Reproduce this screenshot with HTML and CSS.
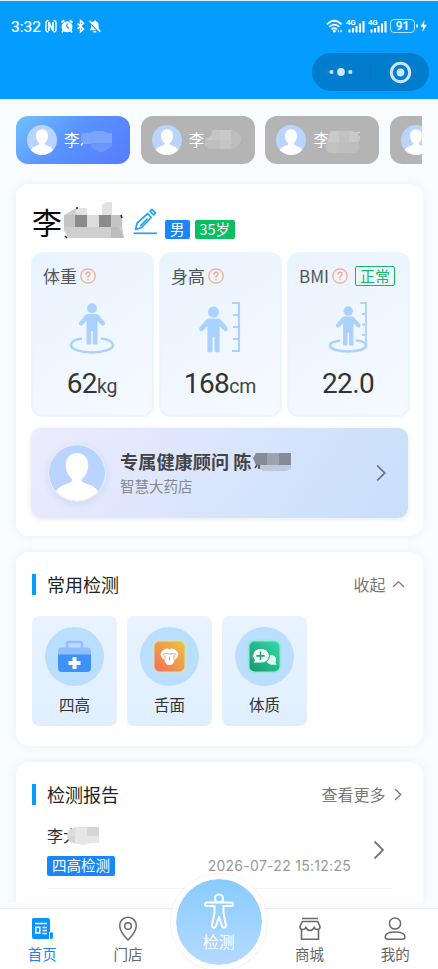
FILE: index.html
```html
<!DOCTYPE html>
<html lang="zh-CN">
<head>
<meta charset="utf-8">
<meta name="viewport" content="width=device-width, initial-scale=1">
<title>健康检测</title>
<link rel="stylesheet" href="styles.css">
</head>
<body>
<svg class="defs" width="0" height="0" aria-hidden="true">
  <defs>
    <symbol id="avatar" viewBox="0 0 60 60">
      <circle cx="30" cy="30" r="30" fill="#b8d4ff"/>
      <path d="M30 8.500C22.500 8.500 18 14 18 21.500C18 28 20.500 32.500 24.500 36.500C26 39 23 40 19.500 41.500C13 43.500 9.500 46 7.500 49.800A30 30 0 0 0 52.500 49.800C50.500 46 47 43.500 40.500 41.500C37 40 34 39 35.500 36.500C39.500 32.500 42 28 42 21.500C42 14 37.500 8.500 30 8.500Z" fill="#fff"/>
    </symbol>
    <symbol id="help" viewBox="0 0 16 16">
      <g fill="none" stroke="#f8a486" stroke-width="1.200" stroke-linecap="round">
        <circle cx="8" cy="8" r="7.200"/>
        <path d="M6 6.300C6 3.400 10.200 3.500 10.100 6C10 7.500 8 7.500 8 9.300"/>
        <path d="M8 11.400V11.600" stroke-width="1.400"/>
      </g>
    </symbol>
    <symbol id="man" viewBox="0 0 28 42">
      <g fill="#abd2ff">
        <circle cx="14" cy="5.200" r="5"/>
        <path d="M10 11H18Q19.500 11 20.500 12L26.800 19.500Q27.600 21 26.300 22.200Q24.800 23.200 23.500 22L19.500 18V40.500Q19.500 41.500 18.500 41.500H15.800Q14.800 41.500 14.800 40.500V28H13.200V40.500Q13.200 41.500 12.200 41.500H9.500Q8.500 41.500 8.500 40.500V18L4.500 22Q3.200 23.200 1.700 22.200Q.4 21 1.200 19.500L7.500 12Q8.500 11 10 11Z"/>
      </g>
    </symbol>
    <symbol id="signal" viewBox="0 0 19 15">
      <path d="M3.500 10.500V13.500M7 9V13.500M10.500 7V13.500M14 4.500V13.500M17.500 2V13.500" stroke="#fff" stroke-width="2.100"/>
    </symbol>
  </defs>
</svg>

<div class="app">
  <header class="header">
    <div class="status">
      <span class="clock">3:32</span>
      <svg class="status-left" width="56" height="15" viewBox="0 0 56 15">
        <g fill="none" stroke="#fff" stroke-width="1.400">
          <path d="M3.500 1.800H2.500Q1 1.800 1 4V10.500Q1 12.800 2.500 12.800H3.500M8.500 1.800H9.500Q11 1.800 11 4V10.500Q11 12.800 9.500 12.800H8.500"/>
          <path d="M4 12V3L8 12V3" stroke-width="1.700"/>
          <path d="M32.500 4.500L38.500 10L35.500 12.800V1.500L38.500 4.300L32.500 10" stroke-width="1.500"/>
          <path d="M16.500 3.500L19.300 1.300M24.700 1.300L27.500 3.500" stroke-width="1.800"/>
        </g>
        <circle cx="22" cy="7.800" r="5.500" fill="#fff"/>
        <path d="M18.500 11L17 13.500M25.500 11L27 13.500" stroke="#fff" stroke-width="1.500"/>
        <path d="M22 4.500V8L24 9.500" fill="none" stroke="#049cff" stroke-width="1.200"/>
        <path d="M44.500 11.200L46 9V6Q46 3 49 2.300V1.500H50.800V2.300Q53.500 3 53.500 6V9L55 11.200Z" fill="#fff"/>
        <path d="M48.500 12H51.300V13.500H48.500Z" fill="#fff"/>
        <path d="M44 3L54.500 13.500" stroke="#049cff" stroke-width="1.200"/>
        <path d="M44.500 1.800L55.300 12.800" stroke="#fff" stroke-width="1.400"/>
      </svg>
      <div class="status-right">
        <svg class="wifi" width="17" height="14" viewBox="0 0 17 14">
          <g fill="none" stroke="#fff" stroke-width="1.700">
            <path d="M1 5.300Q8.300-1.800 15.600 5.300M3.300 7.900Q8.300 3.300 13.300 7.900M5.600 10.300Q8.300 8 11 10.300"/>
          </g>
          <circle cx="8.300" cy="12" r="1.600" fill="#fff"/>
          <path d="M11.500 12L13 10.500V13.500ZM16.300 12L14.500 10.500V13.500Z" fill="#fff"/>
        </svg>
        <span class="cell"><svg width="19" height="15"><use href="#signal"/></svg><b>4G</b></span>
        <span class="cell"><svg width="19" height="15"><use href="#signal"/></svg><b>4G</b></span>
        <span class="battery">91</span>
        <svg class="bolt" width="12" height="14" viewBox="0 0 12 14"><path d="M1 5.500V8.500" stroke="#fff" stroke-width="1.600"/><path d="M8.500 1L4.500 7.700H7.200L6.200 13L11 5.800H8Z" fill="#fff"/></svg>
      </div>
    </div>
    <div class="capsule">
      <svg width="117" height="38" viewBox="0 0 117 38">
        <g fill="#cde6fa"><circle cx="19.500" cy="19" r="2.100"/><circle cx="29" cy="19" r="3.900"/><circle cx="38.300" cy="19" r="2.100"/><circle cx="88.500" cy="19.500" r="3.900"/></g>
        <path d="M58.500 7.500V31" stroke="#0876c4" stroke-width="1"/>
        <circle cx="88.500" cy="19.500" r="9.200" fill="none" stroke="#cde6fa" stroke-width="3"/>
      </svg>
    </div>
  </header>

  <main class="content">
    <div class="members">
      <div class="member active">
        <svg class="face" width="30" height="30"><use href="#avatar"/></svg><span>李</span>
        <svg class="mask" width="34" height="24" viewBox="0 0 34 24"><path d="M4.500 13L2 16.500" stroke="#fff" stroke-width="1.300"/><path d="M3 4H11L15 2H24L28 4H33V17L28 20Q23 25 18 22L13 19L12 15H5Q0 12 3 4Z" fill="#79a5fb"/><path d="M12 14H33V17L28 20Q23 25 18 22L13 19Z" fill="#6d96fa"/></svg>
      </div>
      <div class="member">
        <svg class="face" width="30" height="30"><use href="#avatar"/></svg><span>李</span>
        <svg class="mask wide" width="42" height="22" viewBox="0 0 42 22"><path d="M6 13L3.500 16.500" stroke="#fff" stroke-width="1.300"/><path d="M10 1H29Q36 2 38 6Q41 11 37 15Q34 20 29 20H6Q1 15 4 9H10Z" fill="#bebebe"/><path d="M10 1H29V11H3L10 6Z" fill="#cacaca"/><path d="M10 1H18V11H10ZM18 11H29V20H18Z" fill="#c5c5c5"/></svg>
      </div>
      <div class="member">
        <svg class="face" width="30" height="30"><use href="#avatar"/></svg><span>李</span>
        <svg class="mask" width="37" height="23" viewBox="0 0 37 23"><path d="M31 2L35 1M34 5V10" stroke="#ddd" stroke-width="1"/><path d="M6 0H27Q34 2 34 8V17Q33 22 28 22H8Q0 23 1 15Q2 4 6 0Z" fill="#bebebe"/><path d="M6 0H14V11H2ZM24 0H27L33 3V11H24Z" fill="#cacaca"/><path d="M14 0H24V11H14ZM1 11H14V22H7Q0 22 1 11Z" fill="#c2c2c2"/></svg>
      </div>
      <div class="member">
        <svg class="face" width="30" height="30"><use href="#avatar"/></svg>
      </div>
    </div>

    <section class="card profile">
      <div class="person">
        <span class="name">李</span>
        <svg class="name-mask" width="61" height="37" viewBox="0 0 61 37">
          <path d="M0 13L12 6L23 7V13H38L39 3L46 0H48V13H58V24L60 36H5L0 29Z" fill="#cfcfcf"/>
          <path d="M12 6H23V13H12ZM38 3L43 0H48V13H38Z" fill="#e2e2e2"/>
          <path d="M11 13H23V25H11ZM35 13H47V25H35Z" fill="#8b8b8b"/>
          <path d="M0 13H11V25H0ZM47 13H58V25H47Z" fill="#c4c4c4"/>
          <path d="M23 13H35V25H23Z" fill="#dcdcdc"/>
          <path d="M47 25H55L60 36H47Z" fill="#bdbdbd"/>
          <path d="M12 6H14M57 13L58 16M1 34L3 36" stroke="#222" stroke-width="1.500"/>
        </svg>
        <svg class="pencil" width="25" height="27" viewBox="0 0 25 27">
          <g fill="none" stroke="#23a3f4" stroke-width="1.700" stroke-linejoin="round">
            <path d="M2.500 21.500L4 15.200L14.800 5.500L18.200 9.500L8.500 19.500Z"/><path d="M7.200 18.200L14.700 10.500"/>
            <path d="M17 3.300L19 1.400L22.500 4.800L20.700 6.900Z"/>
            <path d="M.5 25.300H24"/>
          </g>
        </svg>
        <span class="tag blue">男</span><span class="tag green">35岁</span>
      </div>

      <div class="stats">
        <div class="stat">
          <div class="stat-title">体重<svg width="16" height="16"><use href="#help"/></svg></div>
          <svg class="figure" width="46" height="54" viewBox="0 0 46 54"><path d="M13 36.500C5 37.500 2 40 2 43C2 47.500 12 50.500 23 50.500S44 47.500 44 43C44 40 40 37.500 32 36.500" fill="none" stroke="#abd2ff" stroke-width="2.500"/><use href="#man" x="9" y="1" width="28" height="42"/></svg>
          <div class="value">62<small>kg</small></div>
        </div>
        <div class="stat">
          <div class="stat-title">身高<svg width="16" height="16"><use href="#help"/></svg></div>
          <svg class="figure" width="46" height="54" viewBox="0 0 46 54"><use href="#man" x="1" y="4" width="31" height="47"/><path d="M35 1H42V49H35M36 13H42M36 25H42M36 37H42" fill="none" stroke="#abd2ff" stroke-width="2.100"/></svg>
          <div class="value">168<small>cm</small></div>
        </div>
        <div class="stat">
          <div class="stat-title">BMI<svg width="16" height="16"><use href="#help"/></svg><span class="normal">正常</span></div>
          <svg class="figure" width="46" height="54" viewBox="0 0 46 54"><path d="M15 38.500C8 39.500 5 41 5 43.500C5 47 13 49.500 23 49.500S41 47 41 43.500C41 41 37 39 31 38.500" fill="none" stroke="#abd2ff" stroke-width="2.600"/><use href="#man" x="10" y="4" width="26.500" height="40"/><path d="M35.500 1H41V44M37 12H41M37 22.500H41M37 33H41" fill="none" stroke="#abd2ff" stroke-width="1.800"/></svg>
          <div class="value">22.0</div>
        </div>
      </div>

      <div class="advisor">
        <svg class="portrait" width="56" height="56"><use href="#avatar"/></svg>
        <div class="advisor-info">
          <div class="advisor-name">专属健康顾问 陈<svg width="39" height="19" viewBox="0 0 39 19"><path d="M0 6L3 1H38V17L33 19H10L4 15Z" fill="#bdc9de"/><path d="M0 6L3 1H14V13H3Z" fill="#868c96"/><path d="M14 1H26V13H14Z" fill="#9ca3ae"/><path d="M26 1H38V13H26Z" fill="#858b97"/><path d="M2 16L4 13M6 17V13" stroke="#444" stroke-width="1.500"/></svg></div>
          <div class="advisor-store">智慧大药店</div>
        </div>
        <svg class="chevron" width="10" height="18" viewBox="0 0 10 18"><path d="M1.200 1.500L8.700 9L1.200 16.500" fill="none" stroke="#666d78" stroke-width="1.700"/></svg>
      </div>
    </section>

    <section class="card tests">
      <div class="section-head"><h2>常用检测</h2><span class="more">收起<svg width="13" height="8" viewBox="0 0 13 8"><path d="M1 7L6.500 1.500L12 7" fill="none" stroke="#777" stroke-width="1.200"/></svg></span></div>
      <div class="tiles">
        <div class="tile">
          <svg width="59" height="59" viewBox="0 0 59 59"><circle cx="29.500" cy="29.500" r="29.500" fill="#badffe"/><path d="M22 21V17Q22 15 24 15H35Q37 15 37 17V21" fill="none" stroke="#90beff" stroke-width="2.600"/><path d="M13 28V24Q13 20.500 16.500 20.500H42.500Q46 20.500 46 24V28Z" fill="#90beff"/><path d="M13 27.500H46V41Q46 45 42 45H17Q13 45 13 41Z" fill="#3f91fa"/><path d="M29.500 30V42M23.500 36H35.500" stroke="#fff" stroke-width="4"/></svg>
          <span>四高</span>
        </div>
        <div class="tile">
          <svg width="59" height="59" viewBox="0 0 59 59"><defs><linearGradient id="warm" x1="0" y1="1" x2="1" y2="0"><stop offset=".1" stop-color="#f27758"/><stop offset="1" stop-color="#edc43d"/></linearGradient></defs><circle cx="29.500" cy="29.500" r="29.500" fill="#badffe"/><rect x="12.500" y="12.500" width="34" height="34" rx="6" fill="#d2dfcb"/><rect x="14.500" y="14.500" width="30" height="30" rx="5" fill="url(#warm)"/><path d="M20.500 27.500C21.500 24 24.500 21.500 27 21.500Q28.500 21.500 29.500 22.500Q30.500 21.500 32 21.500C34.500 21.500 37.500 24 38.500 27.500C37.500 31 36 32.500 34.500 32.800Q34 38 29.500 38T24.500 32.800C23 32.500 21.500 31 20.500 27.500Z" fill="#fff"/><path d="M23 27.300Q26 25.800 29.500 27Q33 25.800 36 27.300M29.500 29.500V33.500M25 28.500V32.500M34 28.500V32.500" fill="none" stroke="#ef9455" stroke-width=".9"/></svg>
          <span>舌面</span>
        </div>
        <div class="tile">
          <svg width="59" height="59" viewBox="0 0 59 59"><defs><linearGradient id="fresh" x1="0" y1="1" x2="1" y2="0"><stop offset="0" stop-color="#159a6c"/><stop offset="1" stop-color="#35d8ac"/></linearGradient></defs><circle cx="29.500" cy="29.500" r="29.500" fill="#badffe"/><rect x="12.500" y="12.500" width="34" height="34" rx="6" fill="#9ee5e1"/><rect x="14.500" y="14.500" width="30" height="30" rx="5" fill="url(#fresh)"/><path d="M36.500 28A4.800 4.800 0 0 1 40.500 35.500L41.500 37.800H36.500A4.900 4.900 0 0 1 36.500 28Z" fill="#d8fbed"/><path d="M25.500 21.500A8 7.300 0 1 1 25.500 36H18L19.500 33.500A8 7.300 0 0 1 25.500 21.500Z" fill="#effff8" stroke="#25ad83" stroke-width="1"/><path d="M25.500 24.500V33M21.300 28.800H29.700" stroke="#23a87d" stroke-width="1.700"/></svg>
          <span>体质</span>
        </div>
      </div>
    </section>

    <section class="card reports">
      <div class="section-head"><h2>检测报告</h2><span class="more">查看更多<svg class="right" width="8" height="13" viewBox="0 0 8 13"><path d="M1 1L6.700 6.500L1 12" fill="none" stroke="#777" stroke-width="1.300"/></svg></span></div>
      <div class="report">
        <div class="report-body">
          <div class="report-name">李<i>大</i><svg width="33" height="19" viewBox="0 0 33 19"><path d="M1 5L8 1H32V17H24L17 19L4 17L0 11Z" fill="#e6e6e6"/><path d="M20 1H32V10H20ZM0 10H8V17L2 15Z" fill="#d5d5d5"/><path d="M1 5L8 1V10H0Z" fill="#dcdcdc"/></svg></div>
          <div class="report-meta"><span class="tag blue report-tag">四高检测</span><time>2026-07-22 15:12:25</time></div>
        </div>
        <svg class="chevron" width="12" height="20" viewBox="0 0 12 20"><path d="M1.500 1.500L10 10L1.500 18.500" fill="none" stroke="#777" stroke-width="1.800"/></svg>
      </div>
    </section>
  </main>

  <nav class="tabbar">
    <div class="tab current">
      <svg width="26" height="26" viewBox="0 0 26 26"><path d="M4 2H19Q21 2 21 4V16.500H24V21Q24 23 22 23H5Q3 23 3 21V3Z" fill="#0b95fb"/><g fill="none" stroke="#fff" stroke-width="1.500"><path d="M6 7.500H18M13.500 11.500H18M13.500 14.500H18M13.500 17.500H18"/><rect x="6.800" y="11.300" width="4" height="5.700"/><path d="M20.500 16V23" stroke-width="1"/></g></svg>
      <span>首页</span>
    </div>
    <div class="tab">
      <svg width="26" height="26" viewBox="0 0 26 26"><g fill="none" stroke="#696969" stroke-width="1.500"><path d="M13 24C8 19 4.700 14.500 4.700 9.500A8.300 8.300 0 0 1 21.300 9.500C21.300 14.500 18 19 13 24Z"/><circle cx="13" cy="10" r="3.300"/></g></svg>
      <span>门店</span>
    </div>
    <div class="tab center">
      <div class="scan">
        <svg width="32" height="37" viewBox="0 0 32 37"><g fill="none" stroke="#fff" stroke-width="2" stroke-linejoin="round"><circle cx="16" cy="5.500" r="4"/><path d="M4 9.500H28Q30 9.500 30 11.300T28 13H20.500V20L23 32Q23 34.500 21.300 34.700T19 33L16 24L13 33Q12.300 35 10.700 34.700T9 32L11.500 20V13H4Q2 13 2 11.300T4 9.500Z"/></g></svg>
        <span>检测</span>
      </div>
    </div>
    <div class="tab">
      <svg width="26" height="26" viewBox="0 0 26 26"><g fill="none" stroke="#696969" stroke-width="1.600"><path d="M5 2.500H21M5.300 5.500H20.700L23 10.500Q23 13.500 20.300 13.500Q18 13.500 17.200 11.500Q15.500 14.500 13 14.500T8.800 11.500Q8 13.500 5.700 13.500Q3 13.500 3 10.500ZM4.500 13V23.200H21.500V13"/></g></svg>
      <span>商城</span>
    </div>
    <div class="tab">
      <svg width="26" height="26" viewBox="0 0 26 26"><g fill="none" stroke="#696969" stroke-width="1.500"><circle cx="13" cy="7.500" r="5.600"/><path d="M6 23.200Q3.200 23.200 3.200 21C3.200 18 7 16 13 16S23 18 23 21Q23 23.200 20.200 23.200Z"/></g></svg>
      <span>我的</span>
    </div>
  </nav>
</div>
</body>
</html>
```
FILE: styles.css
```css
* { box-sizing: border-box; }
body {
  margin: 0;
  background: #f8fcff;
  color: #333;
  font-family: "Noto Sans CJK SC", sans-serif;
}
svg { display: block; flex: none; }
i { font-style: normal; }
.defs { position: absolute; }
.app {
  width: 438px;
  height: 969px;
  display: flex;
  flex-direction: column;
  overflow: hidden;
}
.header {
  height: 99px;
  flex: none;
  border-top: 1px solid #d9edf8;
  background: #049cff;
  color: #fff;
}
.status {
  display: flex;
  align-items: center;
  height: 52px;
  padding: 0 11px;
}
.clock { width: 34px; margin-top: -1px; font: 400 15.500px/20px Roboto, sans-serif; -webkit-text-stroke: .2px #fff; }
.status-left { margin-top: -2px; }
.status-right { display: flex; align-items: center; margin: -2px -1px 0 auto; }
.wifi { margin-right: 3px; }
.cell { position: relative; margin-right: 3px; }
.cell b { position: absolute; left: 0; top: -1px; font: 700 8px/9px Roboto, sans-serif; letter-spacing: -.4px; }
.battery {
  width: 25px;
  height: 14px;
  border: 1.3px solid #b9e1ff;
  border-radius: 4px;
  font: 600 12px/12px Roboto, sans-serif;
  text-align: center;
}
.bolt { margin-left: 1px; }
.capsule {
  width: 117px;
  height: 38px;
  margin-left: 312px;
  border-radius: 19px;
  background: #027dcd;
}
.content { height: 804px; flex: none; padding: 17px 16px 0; overflow: hidden; }
.members { display: flex; gap: 10.700px; overflow: hidden; }
.member {
  position: relative;
  display: flex;
  align-items: center;
  flex: none;
  width: 114px;
  height: 48px;
  padding-left: 11px;
  border-radius: 12px;
  background: #b4b4b4;
  color: #fff;
  font-size: 15.500px;
  line-height: 22px;
}
.member span { margin-left: 7px; margin-top: -2px; white-space: nowrap; }
.member.active { background: linear-gradient(135deg, #70c2fb 0%, #5a93ff 45%, #567bff 100%); }
.mask { position: absolute; left: 63px; top: 13px; }
.mask.wide { left: 61px; }
.member:nth-child(3) .mask { top: 15px; left: 60px; }
.card {
  width: 406.500px;
  border-radius: 13px;
  background: #fff;
  box-shadow: 0 0 8px rgba(70, 110, 145, .09);
}
.profile { height: 351.500px; margin-top: 20px; padding: 15px 15px 0; }
.person { display: flex; height: 53px; padding-left: 1px; }
.name { width: 32px; color: #080808; font-size: 30px; line-height: 45px; }
.name-mask { margin-top: 3px; }
.pencil { margin: 9px 0 0 8px; }
.tag {
  border-radius: 2px;
  padding: 0 5px;
  color: #fff;
  font-size: 14.500px;
  line-height: 18px;
  height: 19.500px;
}
.tag.blue { background: #1887fb; }
.tag.green { background: #07c160; margin-left: 5px; }
.person .tag { margin-top: 20.500px; }
.person .tag.blue { margin-left: 7px; }
.stats { display: flex; gap: 5px; }
.stat {
  flex: none;
  width: 123px;
  height: 165px;
  border: 2px solid #ebf5ff;
  border-radius: 12px;
  background: linear-gradient(145deg, #e9f3ff, #f6faff);
}
.stat-title {
  display: flex;
  align-items: center;
  height: 26px;
  margin-top: 9px;
  padding-left: 10px;
  color: #555;
  font-size: 17px;
  line-height: 26px;
}
.stat-title svg { margin-left: 3px; }
.normal {
  margin-left: 7px;
  padding: 0 4px;
  height: 20px;
  border: 1.5px solid #16b968;
  border-radius: 2px;
  color: #16b968;
  font-size: 15px;
  line-height: 17px;
}
.figure { margin: 13px 0 0 35.500px; }
.value { margin-top: 8px; padding-right: 1px; text-align: center; font-family: Roboto, sans-serif; font-size: 28px; line-height: 40px; letter-spacing: -.6px; }
.value small { font-size: 19.500px; letter-spacing: -.2px; color: #444; }
.advisor {
  display: flex;
  align-items: center;
  width: 376.500px;
  height: 90px;
  margin-top: 11px;
  padding: 0 23px 0 18px;
  border-radius: 10px;
  background: linear-gradient(125deg, #edecfd 0%, #d9e5fd 50%, #c7dff9 100%);
  box-shadow: 0 1px 5px rgba(60, 80, 120, .14);
}
.portrait { border-radius: 50%; box-shadow: 0 0 0 1px #e8effd, 0 2px 8px rgba(60, 80, 120, .15); }
.advisor-info { margin: -2px auto 0 15px; }
.advisor-name { display: flex; align-items: center; color: #444; font-size: 18.200px; font-weight: 700; line-height: 27px; white-space: nowrap; }
.advisor-name svg { margin-left: 2px; }
.advisor-store { color: #858891; font-size: 14.500px; line-height: 22px; }
.advisor .chevron { margin-right: -1px; }
.tests { height: 193.500px; margin-top: 16.500px; padding: 17px 16px 0; }
.section-head { display: flex; align-items: center; height: 30px; }
h2 {
  display: flex;
  align-items: center;
  margin: 0;
  color: #222;
  font-size: 18px;
  font-weight: 400;
  line-height: 28px;
}
h2::before { content: ""; width: 4px; height: 21px; margin-right: 11px; background: #049cff; }
.more { display: flex; align-items: center; margin-left: auto; color: #777; font-size: 16px; line-height: 24px; padding-right: 2px; }
.more svg { margin-left: 6px; }
.more svg.right { margin: 0 3px 0 8px; }
.tiles { display: flex; gap: 10px; margin-top: 17px; }
.tile {
  display: flex;
  flex-direction: column;
  align-items: center;
  width: 85px;
  height: 110px;
  padding-top: 11px;
  border-radius: 7px;
  background: linear-gradient(#e9f3ff, #e0efff);
}
.tile span { margin-top: 6px; font-size: 15.500px; line-height: 24px; }
.reports { height: 180px; margin-top: 16.500px; padding: 17px 16px 0; }
.report { display: flex; align-items: center; margin: 10px 14px 0 15px; height: 70px; border-bottom: 1px solid #f2f3f4; }
.report-body { width: 304px; }
.report-name { display: flex; align-items: center; font-size: 16px; line-height: 26px; margin-top: -9px; }
.report-name svg { margin-left: -12px; position: relative; }
.report-meta { display: flex; justify-content: space-between; align-items: center; margin-top: 8px; }
.report-tag { padding: 0 5px; }
time { color: #999; font: 400 14px/20px Inter, sans-serif; letter-spacing: .28px; white-space: nowrap; }
.report > .chevron { margin-left: 22px; margin-top: -8px; }
.tabbar {
  display: flex;
  flex: none;
  height: 61px;
  margin-top: 5px;
  border-top: 1px solid #e8edf5;
  background: #fff;
}
.tab { position: relative; display: flex; flex-direction: column; align-items: center; width: 86px; padding-top: 7px; color: #666; font-size: 14.500px; line-height: 22px; }
.tab:first-child { margin-left: -.5px; }
.tab span { margin-top: 1px; }
.tab.current { color: #1686f5; }
.tab.center { width: 96.500px; }
.scan {
  position: absolute;
  top: -35px;
  left: 0;
  width: 96px;
  height: 96px;
  border: 5px solid #fff;
  border-radius: 50%;
  background: linear-gradient(#87ccff, #b6d9ff);
  background-clip: padding-box;
  box-shadow: 0 0 1px 1px #eef3f8;
  color: #fff;
  display: flex;
  flex-direction: column;
  align-items: center;
  padding-top: 14px;
  font-size: 16px;
}
.scan span { margin-top: 0; }
```
